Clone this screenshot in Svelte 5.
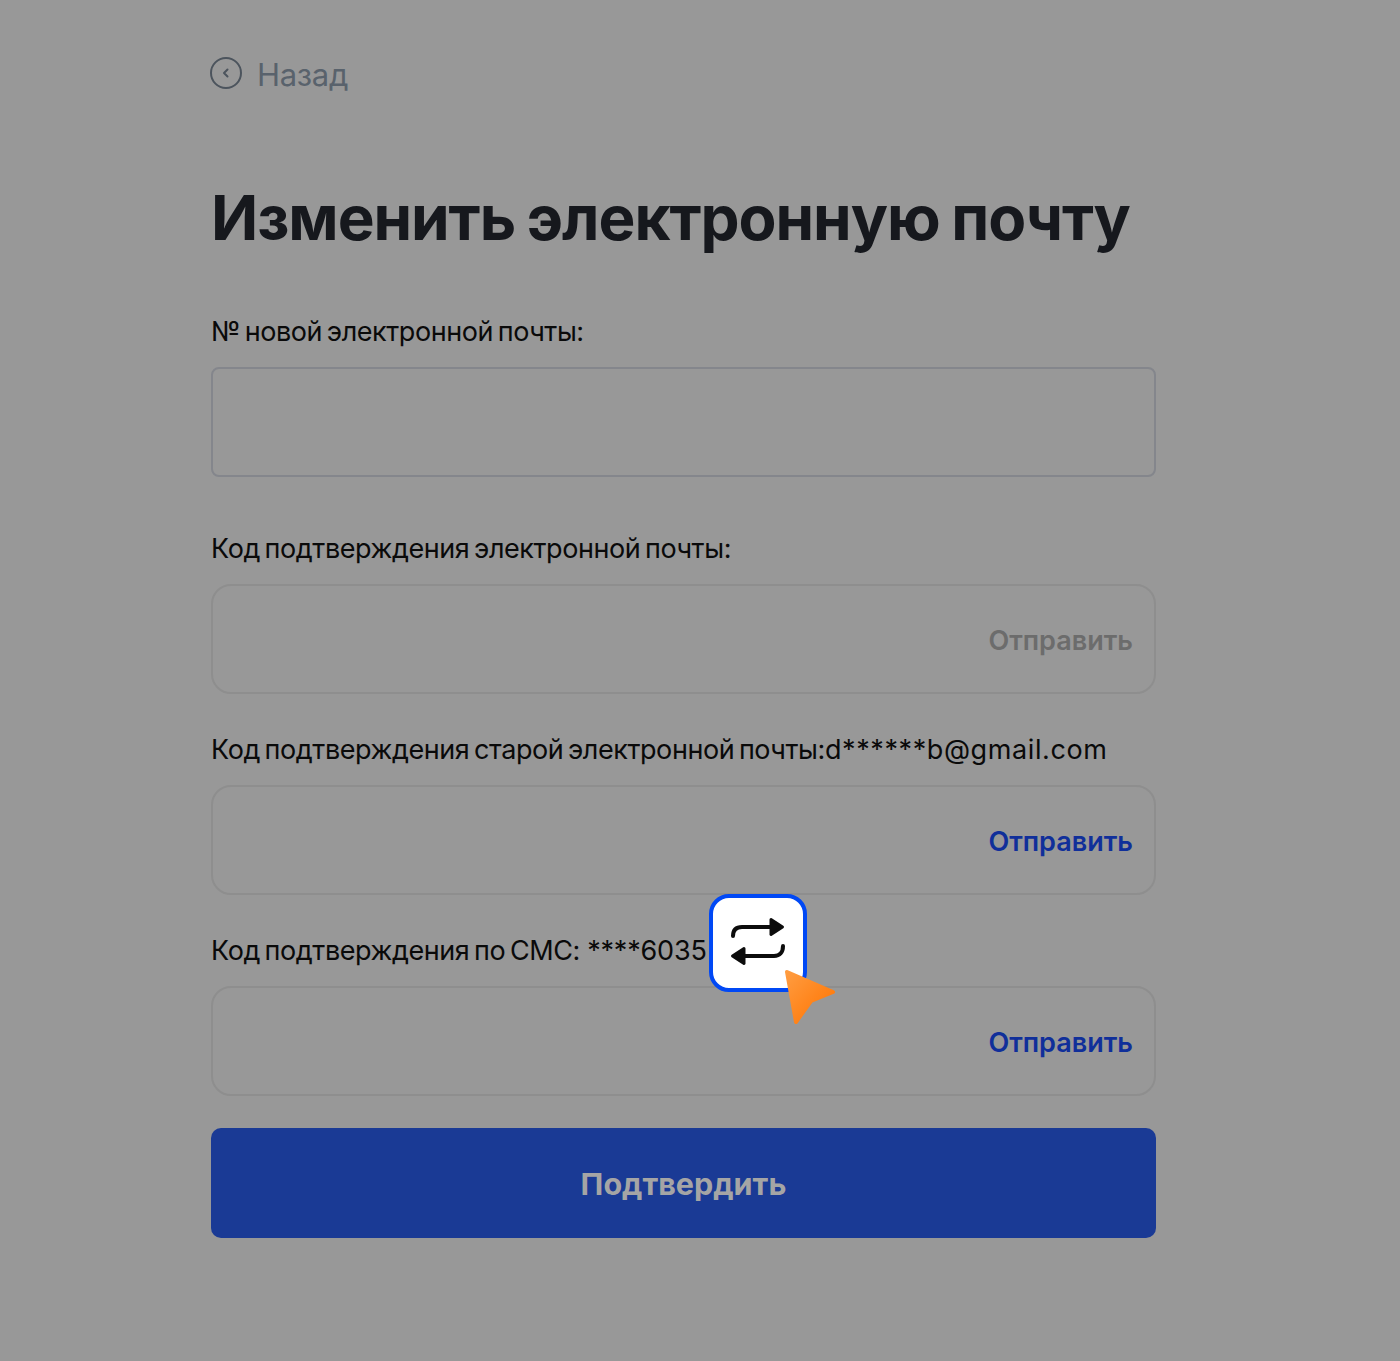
<script>
  const codeFields = [
    { label: 'Код подтверждения электронной почты:', active: false },
    { label: 'Код подтверждения старой электронной почты:', hint: 'd******b@gmail.com', active: true },
    { label: 'Код подтверждения по СМС:', phone: ' ****6035', active: true, swap: true }
  ];
</script>

<div class="page">
  <a class="back" href="#back">
    <svg width="32" height="32" viewBox="0 0 32 32" fill="none">
      <circle cx="16" cy="16" r="15" stroke="#4c545d" stroke-width="2"/>
      <path d="M17.5 12.5L14 16l3.5 3.5" stroke="#4c545d" stroke-width="2" stroke-linecap="round" stroke-linejoin="round"/>
    </svg>
    <span>Назад</span>
  </a>

  <h1>Изменить электронную почту</h1>

  <div class="field first">
    <div class="label">№ новой электронной почты:</div>
    <div class="input square"></div>
  </div>

  {#each codeFields as f, i}
    <div class="field" class:second={i === 0}>
      <div class="label">
        {f.label}{#if f.hint}<span class="hint">{f.hint}</span>{/if}{#if f.phone}<span class="phone">{f.phone}</span>{/if}
      </div>
      <div class="input">
        <span class="send" class:active={f.active}>Отправить</span>
      </div>
      {#if f.swap}
        <div class="swap">
          <svg width="58" height="50" viewBox="0 0 58 50" fill="none">
            <path d="M4 18c0-6 3-9 9-9h30" stroke="#0c0c0c" stroke-width="4" stroke-linecap="round"/>
            <path d="M42 1.500l11.500 7.500-11.500 7.500z" fill="#0c0c0c" stroke="#0c0c0c" stroke-width="3" stroke-linejoin="round"/>
            <path d="M54 28c0 6-3 10-9 10H15" stroke="#0c0c0c" stroke-width="4" stroke-linecap="round"/>
            <path d="M15 30.500L3.500 38l11.500 7.500z" fill="#0c0c0c" stroke="#0c0c0c" stroke-width="3" stroke-linejoin="round"/>
          </svg>
        </div>
        <svg class="pointer" width="60" height="62" viewBox="0 0 60 62">
          <defs>
            <linearGradient id="cursorFill" x1="0" y1="0" x2="1" y2="1">
              <stop offset="0" stop-color="#ff9c40"/>
              <stop offset="1" stop-color="#ff7300"/>
            </linearGradient>
          </defs>
          <path d="M6 6l46 20-22 9-15 21z" fill="url(#cursorFill)" stroke="url(#cursorFill)" stroke-width="4" stroke-linejoin="round"/>
        </svg>
      {/if}
    </div>
  {/each}

  <button class="submit" type="button">Подтвердить</button>
</div>

<style>
  :global(body) {
    margin: 0;
    background: #989898;
  }

  .page {
    box-sizing: border-box;
    width: 1400px;
    height: 1361px;
    padding: 56px 244px 0 211px;
    font-family: Inter, "Noto Sans", sans-serif;
    color: #0a0a0a;
  }

  .back {
    display: flex;
    align-items: center;
    gap: 15px;
    height: 36px;
    color: #59626c;
    font-size: 31px;
    letter-spacing: -0.3px;
    text-decoration: none;
  }

  .back svg {
    margin: -3px 0 0 -1px;
  }

  h1 {
    margin: 90px 0 0;
    font-size: 62px;
    line-height: 72px;
    font-weight: 700;
    letter-spacing: -1.05px;
    word-spacing: -2px;
    color: #16181d;
    white-space: nowrap;
  }

  .field {
    position: relative;
    margin-top: 34px;
  }

  .field.first {
    margin-top: 56px;
  }

  .field.second {
    margin-top: 50px;
  }

  .label {
    height: 40px;
    line-height: 44px;
    font-size: 27px;
    letter-spacing: -0.43px;
    word-spacing: -2.5px;
    white-space: pre-wrap;
  }

  .hint {
    letter-spacing: 0.6px;
    word-spacing: 0;
  }

  .phone {
    letter-spacing: -0.2px;
    word-spacing: 0;
  }

  .input {
    box-sizing: border-box;
    display: flex;
    align-items: center;
    justify-content: flex-end;
    height: 110px;
    margin-top: 17px;
    padding: 2px 21px 0;
    border: 2px solid #8e8e8e;
    border-radius: 20px;
  }

  .input.square {
    border-color: #84868c;
    border-radius: 8px;
  }

  .send {
    font-size: 27px;
    font-weight: 600;
    color: #6c6c6c;
  }

  .send.active {
    color: #102f9a;
  }

  .swap {
    position: absolute;
    left: 498px;
    top: -35px;
    box-sizing: border-box;
    display: flex;
    align-items: center;
    justify-content: center;
    width: 98px;
    height: 98px;
    background: #fff;
    border: 4px solid #0048f5;
    border-radius: 20px;
  }

  .pointer {
    position: absolute;
    left: 570px;
    top: 37px;
  }

  .submit {
    display: block;
    width: 100%;
    height: 110px;
    margin-top: 32px;
    border: 0;
    border-radius: 10px;
    background: #1a3a95;
    color: #a5a5a5;
    font-family: inherit;
    font-size: 30.5px;
    font-weight: 700;
  }
</style>
